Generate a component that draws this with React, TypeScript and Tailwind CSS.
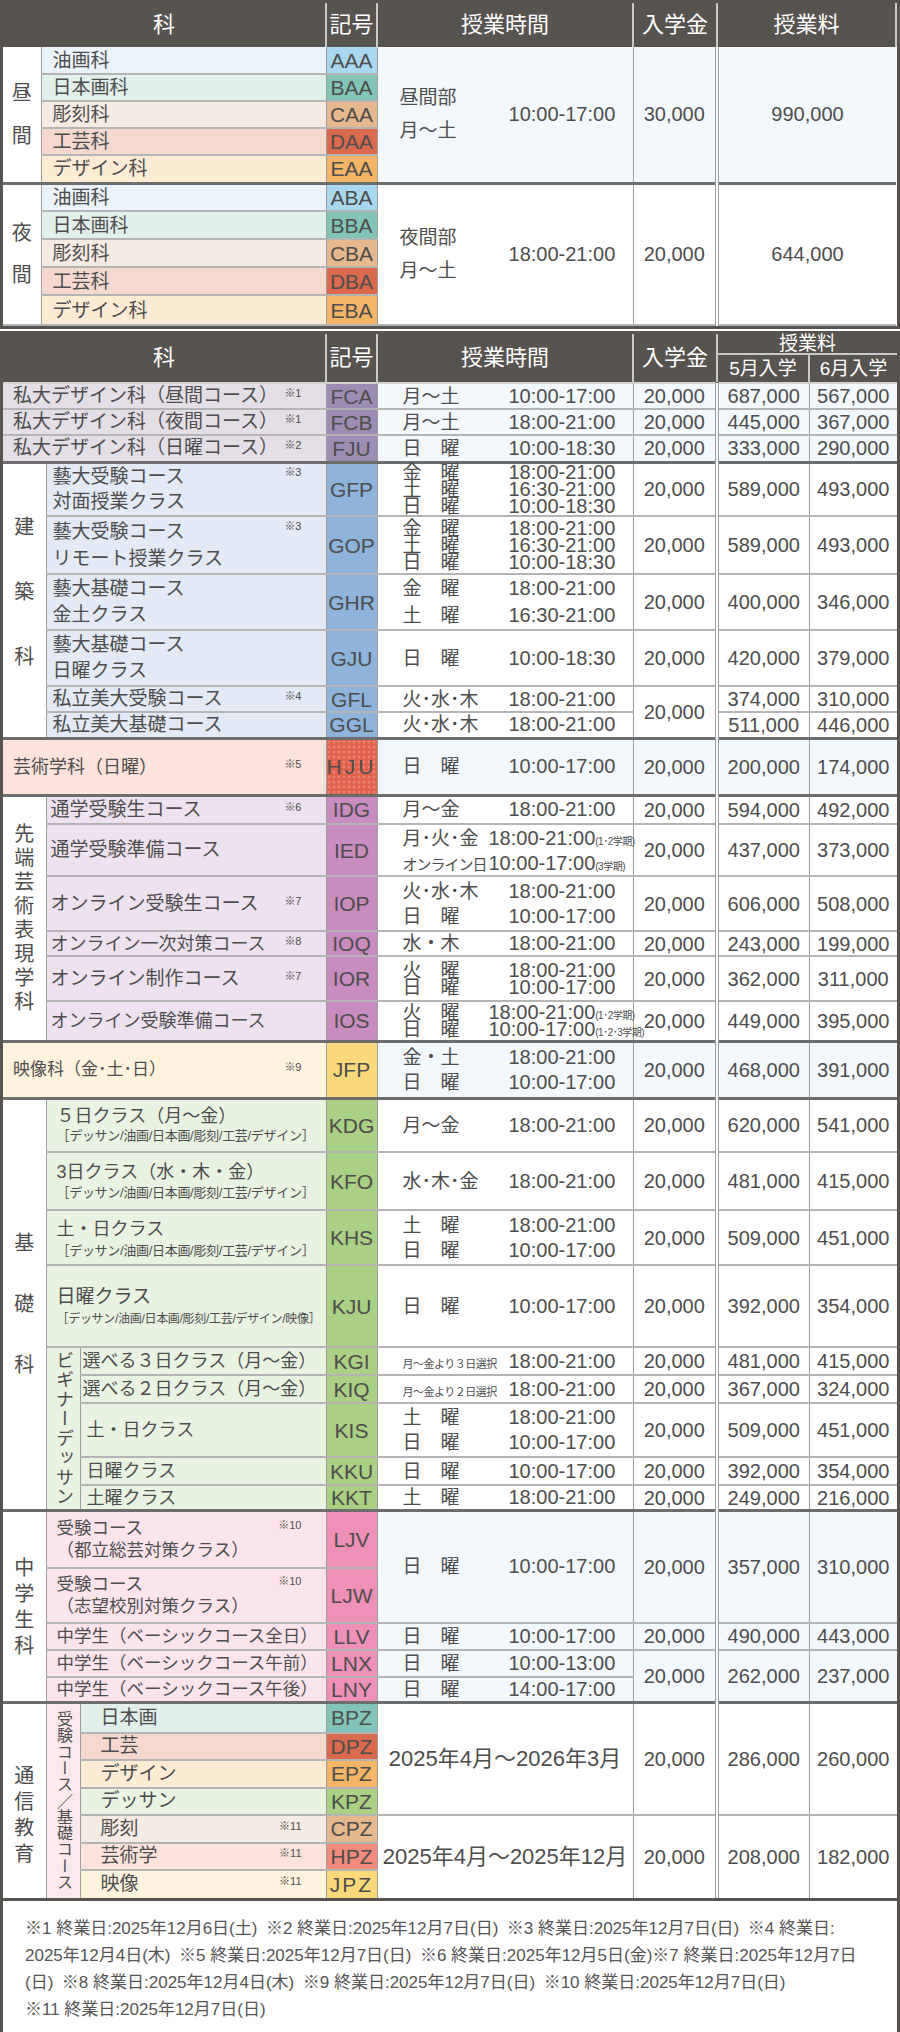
import React from "react";

type Line = { d: string; t: string; n?: string; ds?: string };

const TD = "p-0 border-r border-r-[#9d9d9d]";
const R = "border-b-2 border-b-[#b4b4b4]";
const G = "border-t-[3px] border-t-[#6d6d6d]";
const BL = "bg-[#f3f8fd]";
const HT = "p-0 font-normal text-[22px] leading-none border-r-2 border-r-[#c9c9c9]";

function Times({ lines, lh = "leading-[22px]", dw = "w-[106px]" }: { lines: Line[]; lh?: string; dw?: string }) {
  return (
    <div className="flex flex-col pl-[25px]">
      {lines.map((l, i) => (
        <div key={i} className={`flex items-baseline whitespace-nowrap ${lh}`}>
          <span className={`${dw} shrink-0 ${l.ds ?? "text-[19px]"}`}>{l.d}</span>
          <span className="text-[20px]">{l.t}</span>
          {l.n && <span className="text-[10px] leading-none tracking-[-0.5px]">{l.n}</span>}
        </div>
      ))}
    </div>
  );
}

function Name({
  a,
  b,
  sub,
  note,
  pl = "pl-[6px]",
  size = "text-[19px]",
  lh = "leading-[22px]",
  subCls = "text-[13px] tracking-[-0.3px]",
}: {
  a: string;
  b?: string;
  sub?: string;
  note?: string;
  pl?: string;
  size?: string;
  lh?: string;
  subCls?: string;
}) {
  return (
    <div className={`flex flex-col pr-[24px] ${pl} ${size}`}>
      <div className={`flex items-start justify-between whitespace-nowrap ${lh}`}>
        <span>{a}</span>
        {note && <span className="text-[11px] leading-[16px]">{note}</span>}
      </div>
      {b && <div className={`whitespace-nowrap ${lh}`}>{b}</div>}
      {sub && <div className={`whitespace-nowrap leading-[18px] ${subCls}`}>{sub}</div>}
    </div>
  );
}

function Code({ c, bg, x = "" }: { c: string; bg: string; x?: string }) {
  return <td className={`${TD} ${bg} text-center text-[21px] leading-none ${x}`}>{c}</td>;
}

function Fee({ v, k, bg = "bg-white", rs }: { v: string; k: 0 | 1 | 2 | 3; bg?: string; rs?: number }) {
  const cls =
    k === 0
      ? "border-r border-r-[#9d9d9d]"
      : k === 1
        ? "border-r border-r-[#9d9d9d] border-l-4 border-double border-l-[#9d9d9d]"
        : k === 3
          ? "border-l-4 border-double border-l-[#9d9d9d]"
          : "";
  return (
    <td rowSpan={rs} className={`p-0 text-center text-[20px] leading-none ${bg} ${cls}`}>
      {v}
    </td>
  );
}

function Fees({ a, b, c, bg = "bg-white", rs }: { a: string; b: string; c: string; bg?: string; rs?: number }) {
  return (
    <>
      <Fee v={a} k={0} bg={bg} rs={rs} />
      <Fee v={b} k={1} bg={bg} rs={rs} />
      <Fee v={c} k={2} bg={bg} rs={rs} />
    </>
  );
}

function VLabel({ t, gap, rs, x = "" }: { t: string; gap: string; rs: number; x?: string }) {
  return (
    <td rowSpan={rs} className={`${TD} bg-white`}>
      <div className={`flex flex-col items-center text-[20px] leading-[20px] ${gap} ${x}`}>
        {t.split("").map((ch, i) => (
          <span key={i}>{ch}</span>
        ))}
      </div>
    </td>
  );
}

const BR1 = "［デッサン/油画/日本画/彫刻/工芸/デザイン］";
const BR2 = "［デッサン/油画/日本画/彫刻/工芸/デザイン/映像］";
const TINY = "text-[11px] leading-none tracking-[-0.5px]";

const NOTES = [
  "※1 終業日:2025年12月6日(土)\u2002※2 終業日:2025年12月7日(日)\u2002※3 終業日:2025年12月7日(日)\u2002※4 終業日:",
  "2025年12月4日(木)\u2002※5 終業日:2025年12月7日(日)\u2002※6 終業日:2025年12月5日(金)※7 終業日:2025年12月7日",
  "(日)\u2002※8 終業日:2025年12月4日(木)\u2002※9 終業日:2025年12月7日(日)\u2002※10 終業日:2025年12月7日(日)",
  "※11 終業日:2025年12月7日(日)",
];

const DAY = [
  ["油画科", "AAA", "bg-[#eaf2fa]", "bg-[#a9d7ef]"],
  ["日本画科", "BAA", "bg-[#e2f0ec]", "bg-[#82c5b8]"],
  ["彫刻科", "CAA", "bg-[#f5ebe2]", "bg-[#e5b98d]"],
  ["工芸科", "DAA", "bg-[#f5d9cf]", "bg-[#db6a4d]"],
  ["デザイン科", "EAA", "bg-[#fdebd3]", "bg-[#f4b566]"],
];
const NIGHT = [
  ["油画科", "ABA", "bg-[#eaf2fa]", "bg-[#a9d7ef]"],
  ["日本画科", "BBA", "bg-[#e2f0ec]", "bg-[#82c5b8]"],
  ["彫刻科", "CBA", "bg-[#f5ebe2]", "bg-[#e5b98d]"],
  ["工芸科", "DBA", "bg-[#f5d9cf]", "bg-[#db6a4d]"],
  ["デザイン科", "EBA", "bg-[#fdebd3]", "bg-[#f4b566]"],
];

function TopTable() {
  return (
    <div className="border-[3px] border-[#57534f]">
      <table className="w-full table-fixed border-collapse text-[19px] leading-none">
        <colgroup>
          <col className="w-[38px]" />
          <col className="w-[285px]" />
          <col className="w-[51px]" />
          <col className="w-[256px]" />
          <col className="w-[84px]" />
          <col />
        </colgroup>
        <thead>
          <tr className="h-[44px] bg-[#57534f] text-white">
            <th colSpan={2} className={HT}>科</th>
            <th className={HT}>記号</th>
            <th className={HT}>授業時間</th>
            <th className={HT}>入学金</th>
            <th className={`${HT} border-r-0`}>授業料</th>
          </tr>
        </thead>
        <tbody>
          {DAY.map(([n, c, nb, cb], i) => (
            <tr key={c} className={`${R} ${i === 4 ? "h-[28px]" : "h-[27px]"}`}>
              {i === 0 && <VLabel t="昼間" gap="gap-[23px]" rs={5} />}
              <td className={`${TD} ${nb}`}>
                <div className="pl-[11px]">{n}</div>
              </td>
              <Code c={c} bg={cb} />
              {i === 0 && (
                <>
                  <td rowSpan={5} className={`${TD} ${BL}`}>
                    <div className="flex items-center pl-[22px]">
                      <div className="flex w-[109px] flex-col gap-[14px] leading-[19px]">
                        <span>昼間部</span>
                        <span>月〜土</span>
                      </div>
                      <span className="text-[20px]">10:00-17:00</span>
                    </div>
                  </td>
                  <Fee v="30,000" k={0} bg={BL} rs={5} />
                  <Fee v="990,000" k={3} bg={BL} rs={5} />
                </>
              )}
            </tr>
          ))}
          {NIGHT.map(([n, c, nb, cb], i) => (
            <tr key={c} className={`${R} ${i === 0 ? G : ""} ${i === 4 ? "h-[30px]" : "h-[28px]"}`}>
              {i === 0 && <VLabel t="夜間" gap="gap-[22px]" rs={5} />}
              <td className={`${TD} ${nb}`}>
                <div className="pl-[11px]">{n}</div>
              </td>
              <Code c={c} bg={cb} />
              {i === 0 && (
                <>
                  <td rowSpan={5} className={`${TD} bg-white`}>
                    <div className="flex items-center pl-[22px]">
                      <div className="flex w-[109px] flex-col gap-[14px] leading-[19px]">
                        <span>夜間部</span>
                        <span>月〜土</span>
                      </div>
                      <span className="text-[20px]">18:00-21:00</span>
                    </div>
                  </td>
                  <Fee v="20,000" k={0} rs={5} />
                  <Fee v="644,000" k={3} rs={5} />
                </>
              )}
            </tr>
          ))}
        </tbody>
      </table>
    </div>
  );
}

const one = (d: string, t: string): Line[] => [{ d, t }];

function MainTable() {
  const pN = "bg-[#e4dee7]";
  const pC = "bg-[#9e8db2]";
  const aN = "bg-[#e3eaf5]";
  const aC = "bg-[#8fb3da]";
  const sN = "bg-[#efe2f0]";
  const sC = "bg-[#c98cbf]";
  const kN = "bg-[#e9f3e1]";
  const kC = "bg-[#a9d083]";
  const mN = "bg-[#fce4ed]";
  const mC = "bg-[#ee90b8]";
  return (
    <div className="mt-[2px] border-[3px] border-[#57534f]">
      <table className="w-full table-fixed border-collapse text-[19px] leading-none">
        <colgroup>
          <col className="w-[43px]" />
          <col className="w-[34px]" />
          <col className="w-[246px]" />
          <col className="w-[51px]" />
          <col className="w-[256px]" />
          <col className="w-[84px]" />
          <col className="w-[92px]" />
          <col />
        </colgroup>
        <thead>
          <tr className="h-[20px] bg-[#57534f] text-white">
            <th colSpan={3} rowSpan={2} className={HT}>科</th>
            <th rowSpan={2} className={`${HT} border-l-2 border-l-[#c9c9c9]`}>記号</th>
            <th rowSpan={2} className={HT}>授業時間</th>
            <th rowSpan={2} className={HT}>入学金</th>
            <th colSpan={2} className="border-b-2 border-b-[#c9c9c9] p-0 text-[19px] font-normal leading-none">
              授業料
            </th>
          </tr>
          <tr className="h-[29px] bg-[#57534f] text-white">
            <th className="border-r-2 border-r-[#c9c9c9] p-0 text-[19px] font-normal leading-none">5月入学</th>
            <th className="p-0 text-[19px] font-normal leading-none">6月入学</th>
          </tr>
        </thead>
        <tbody>
          {/* 私大デザイン科 */}
          <tr className={`${R} h-[26px] border-t-2 border-t-[#d4d4d4]`}>
            <td colSpan={3} className={`${TD} ${pN}`}>
              <Name a="私大デザイン科（昼間コース）" note="※1" pl="pl-[10px]" />
            </td>
            <Code c="FCA" bg={pC} />
            <td className={`${TD} ${BL}`}><Times lines={one("月〜土", "10:00-17:00")} /></td>
            <Fees a="20,000" b="687,000" c="567,000" bg={BL} />
          </tr>
          <tr className={`${R} h-[26px]`}>
            <td colSpan={3} className={`${TD} ${pN}`}>
              <Name a="私大デザイン科（夜間コース）" note="※1" pl="pl-[10px]" />
            </td>
            <Code c="FCB" bg={pC} />
            <td className={`${TD} ${BL}`}><Times lines={one("月〜土", "18:00-21:00")} /></td>
            <Fees a="20,000" b="445,000" c="367,000" bg={BL} />
          </tr>
          <tr className={`${R} h-[27px]`}>
            <td colSpan={3} className={`${TD} ${pN}`}>
              <Name a="私大デザイン科（日曜コース）" note="※2" pl="pl-[10px]" />
            </td>
            <Code c="FJU" bg={pC} />
            <td className={`${TD} ${BL}`}><Times lines={one("日　曜", "10:00-18:30")} /></td>
            <Fees a="20,000" b="333,000" c="290,000" bg={BL} />
          </tr>

          {/* 建築科 */}
          <tr className={`${R} ${G} h-[54px]`}>
            <VLabel t="建築科" gap="gap-[45px]" rs={6} x="pb-[16px]" />
            <td colSpan={2} className={`${TD} ${aN}`}>
              <Name a="藝大受験コース" b="対面授業クラス" note="※3" lh="leading-[25px]" />
            </td>
            <Code c="GFP" bg={aC} />
            <td className={TD}>
              <Times
                lh="leading-[16px]"
                lines={[
                  { d: "金　曜", t: "18:00-21:00" },
                  { d: "土　曜", t: "16:30-21:00" },
                  { d: "日　曜", t: "10:00-18:30" },
                ]}
              />
            </td>
            <Fees a="20,000" b="589,000" c="493,000" />
          </tr>
          <tr className={`${R} h-[58px]`}>
            <td colSpan={2} className={`${TD} ${aN}`}>
              <Name a="藝大受験コース" b="リモート授業クラス" note="※3" lh="leading-[27px]" />
            </td>
            <Code c="GOP" bg={aC} />
            <td className={TD}>
              <Times
                lh="leading-[17px]"
                lines={[
                  { d: "金　曜", t: "18:00-21:00" },
                  { d: "土　曜", t: "16:30-21:00" },
                  { d: "日　曜", t: "10:00-18:30" },
                ]}
              />
            </td>
            <Fees a="20,000" b="589,000" c="493,000" />
          </tr>
          <tr className={`${R} h-[55px]`}>
            <td colSpan={2} className={`${TD} ${aN}`}>
              <Name a="藝大基礎コース" b="金土クラス" lh="leading-[26px]" />
            </td>
            <Code c="GHR" bg={aC} />
            <td className={TD}>
              <Times
                lh="leading-[26px]"
                lines={[
                  { d: "金　曜", t: "18:00-21:00" },
                  { d: "土　曜", t: "16:30-21:00" },
                ]}
              />
            </td>
            <Fees a="20,000" b="400,000" c="346,000" />
          </tr>
          <tr className={`${R} h-[56px]`}>
            <td colSpan={2} className={`${TD} ${aN}`}>
              <Name a="藝大基礎コース" b="日曜クラス" lh="leading-[26px]" />
            </td>
            <Code c="GJU" bg={aC} />
            <td className={TD}><Times lines={one("日　曜", "10:00-18:30")} /></td>
            <Fees a="20,000" b="420,000" c="379,000" />
          </tr>
          <tr className={`${R} h-[26px]`}>
            <td colSpan={2} className={`${TD} ${aN}`}>
              <Name a="私立美大受験コース" note="※4" />
            </td>
            <Code c="GFL" bg={aC} />
            <td className={TD}><Times lines={one("火･水･木", "18:00-21:00")} /></td>
            <Fee v="20,000" k={0} rs={2} />
            <Fee v="374,000" k={1} />
            <Fee v="310,000" k={2} />
          </tr>
          <tr className={`${R} h-[26px]`}>
            <td colSpan={2} className={`${TD} ${aN}`}>
              <Name a="私立美大基礎コース" />
            </td>
            <Code c="GGL" bg={aC} />
            <td className={TD}><Times lines={one("火･水･木", "18:00-21:00")} /></td>
            <Fee v="511,000" k={1} />
            <Fee v="446,000" k={2} />
          </tr>

          {/* 芸術学科 */}
          <tr className={`${R} ${G} h-[57px]`}>
            <td colSpan={3} className={`${TD} bg-[#fde3db]`}>
              <Name a="芸術学科（日曜）" note="※5" pl="pl-[10px]" size="text-[18px]" />
            </td>
            <Code
              c="HJU"
              bg="bg-[#e2614b] bg-[radial-gradient(rgba(255,255,255,0.45)_0.8px,transparent_1.2px)] bg-[length:5px_5px]"
              x="tracking-[3px]"
            />
            <td className={`${TD} ${BL}`}><Times lines={one("日　曜", "10:00-17:00")} /></td>
            <Fees a="20,000" b="200,000" c="174,000" bg={BL} />
          </tr>

          {/* 先端芸術表現学科 */}
          <tr className={`${R} ${G} h-[29px]`}>
            <VLabel t="先端芸術表現学科" gap="gap-[4px]" rs={6} />
            <td colSpan={2} className={`${TD} ${sN}`}>
              <Name a="通学受験生コース" note="※6" pl="pl-[4px]" />
            </td>
            <Code c="IDG" bg={sC} />
            <td className={TD}><Times lines={one("月〜金", "18:00-21:00")} /></td>
            <Fees a="20,000" b="594,000" c="492,000" />
          </tr>
          <tr className={`${R} h-[52px]`}>
            <td colSpan={2} className={`${TD} ${sN}`}>
              <Name a="通学受験準備コース" pl="pl-[4px]" />
            </td>
            <Code c="IED" bg={sC} />
            <td className={TD}>
              <Times
                lh="leading-[24px]"
                dw="w-[86px]"
                lines={[
                  { d: "月･火･金", t: "18:00-21:00", n: "(1･2学期)" },
                  { d: "オンライン日", t: "10:00-17:00", n: "(3学期)", ds: "text-[15px] leading-none tracking-[-1px]" },
                ]}
              />
            </td>
            <Fees a="20,000" b="437,000" c="373,000" />
          </tr>
          <tr className={`${R} h-[55px]`}>
            <td colSpan={2} className={`${TD} ${sN}`}>
              <Name a="オンライン受験生コース" note="※7" pl="pl-[4px]" />
            </td>
            <Code c="IOP" bg={sC} />
            <td className={TD}>
              <Times
                lh="leading-[25px]"
                lines={[
                  { d: "火･水･木", t: "18:00-21:00" },
                  { d: "日　曜", t: "10:00-17:00" },
                ]}
              />
            </td>
            <Fees a="20,000" b="606,000" c="508,000" />
          </tr>
          <tr className={`${R} h-[25px]`}>
            <td colSpan={2} className={`${TD} ${sN}`}>
              <Name a="オンライン一次対策コース" note="※8" pl="pl-[4px]" size="text-[18px]" />
            </td>
            <Code c="IOQ" bg={sC} />
            <td className={TD}><Times lines={one("水・木", "18:00-21:00")} /></td>
            <Fees a="20,000" b="243,000" c="199,000" />
          </tr>
          <tr className={`${R} h-[45px]`}>
            <td colSpan={2} className={`${TD} ${sN}`}>
              <Name a="オンライン制作コース" note="※7" pl="pl-[4px]" />
            </td>
            <Code c="IOR" bg={sC} />
            <td className={TD}>
              <Times
                lh="leading-[16px]"
                lines={[
                  { d: "火　曜", t: "18:00-21:00" },
                  { d: "日　曜", t: "10:00-17:00" },
                ]}
              />
            </td>
            <Fees a="20,000" b="362,000" c="311,000" />
          </tr>
          <tr className={`${R} h-[40px]`}>
            <td colSpan={2} className={`${TD} ${sN}`}>
              <Name a="オンライン受験準備コース" pl="pl-[4px]" size="text-[18px]" />
            </td>
            <Code c="IOS" bg={sC} />
            <td className={TD}>
              <Times
                lh="leading-[17px]"
                dw="w-[86px]"
                lines={[
                  { d: "火　曜", t: "18:00-21:00", n: "(1･2学期)" },
                  { d: "日　曜", t: "10:00-17:00", n: "(1･2･3学期)" },
                ]}
              />
            </td>
            <Fees a="20,000" b="449,000" c="395,000" />
          </tr>

          {/* 映像科 */}
          <tr className={`${R} ${G} h-[57px]`}>
            <td colSpan={3} className={`${TD} bg-[#fef3dc]`}>
              <Name a="映像科（金･土･日）" note="※9" pl="pl-[10px]" size="text-[17px]" />
            </td>
            <Code c="JFP" bg="bg-[#fad97a]" />
            <td className={`${TD} ${BL}`}>
              <Times
                lh="leading-[25px]"
                lines={[
                  { d: "金・土", t: "18:00-21:00" },
                  { d: "日　曜", t: "10:00-17:00" },
                ]}
              />
            </td>
            <Fees a="20,000" b="468,000" c="391,000" bg={BL} />
          </tr>

          {/* 基礎科 */}
          <tr className={`${R} ${G} h-[54px]`}>
            <VLabel t="基礎科" gap="gap-[41px]" rs={9} />
            <td colSpan={2} className={`${TD} ${kN}`}>
              <Name a="５日クラス（月〜金）" sub={BR1} pl="pl-[10px]" size="text-[18px]" />
            </td>
            <Code c="KDG" bg={kC} />
            <td className={TD}><Times lines={one("月〜金", "18:00-21:00")} /></td>
            <Fees a="20,000" b="620,000" c="541,000" />
          </tr>
          <tr className={`${R} h-[58px]`}>
            <td colSpan={2} className={`${TD} ${kN}`}>
              <Name a="3日クラス（水・木・金）" sub={BR1} pl="pl-[10px]" size="text-[18px]" lh="leading-[24px]" />
            </td>
            <Code c="KFO" bg={kC} />
            <td className={TD}><Times lines={one("水･木･金", "18:00-21:00")} /></td>
            <Fees a="20,000" b="481,000" c="415,000" />
          </tr>
          <tr className={`${R} h-[55px]`}>
            <td colSpan={2} className={`${TD} ${kN}`}>
              <Name a="土・日クラス" sub={BR1} pl="pl-[10px]" size="text-[18px]" lh="leading-[26px]" />
            </td>
            <Code c="KHS" bg={kC} />
            <td className={TD}>
              <Times
                lh="leading-[24px]"
                lines={[
                  { d: "土　曜", t: "18:00-21:00" },
                  { d: "日　曜", t: "10:00-17:00" },
                ]}
              />
            </td>
            <Fees a="20,000" b="509,000" c="451,000" />
          </tr>
          <tr className={`${R} h-[82px]`}>
            <td colSpan={2} className={`${TD} ${kN}`}>
              <Name
                a="日曜クラス"
                sub={BR2}
                pl="pl-[10px]"
                size="text-[19px]"
                lh="leading-[26px]"
                subCls="text-[12px] tracking-[-0.3px]"
              />
            </td>
            <Code c="KJU" bg={kC} />
            <td className={TD}><Times lines={one("日　曜", "10:00-17:00")} /></td>
            <Fees a="20,000" b="392,000" c="354,000" />
          </tr>
          <tr className={`${R} h-[28px]`}>
            <td rowSpan={5} className={`${TD} ${kN} align-top`}>
              <div className="flex justify-center pt-[3px]">
                <span className="text-[18px] leading-[18px] tracking-[1.5px] [writing-mode:vertical-rl]">ビギナーデッサン</span>
              </div>
            </td>
            <td className={`${TD} ${kN}`}>
              <Name a="選べる３日クラス（月〜金）" pl="pl-[2px]" size="text-[18px]" />
            </td>
            <Code c="KGI" bg={kC} />
            <td className={TD}>
              <Times lines={[{ d: "月〜金より３日選択", t: "18:00-21:00", ds: TINY }]} />
            </td>
            <Fees a="20,000" b="481,000" c="415,000" />
          </tr>
          <tr className={`${R} h-[28px]`}>
            <td className={`${TD} ${kN}`}>
              <Name a="選べる２日クラス（月〜金）" pl="pl-[2px]" size="text-[18px]" />
            </td>
            <Code c="KIQ" bg={kC} />
            <td className={TD}>
              <Times lines={[{ d: "月〜金より２日選択", t: "18:00-21:00", ds: TINY }]} />
            </td>
            <Fees a="20,000" b="367,000" c="324,000" />
          </tr>
          <tr className={`${R} h-[54px]`}>
            <td className={`${TD} ${kN}`}>
              <Name a="土・日クラス" pl="pl-[6px]" size="text-[18px]" />
            </td>
            <Code c="KIS" bg={kC} />
            <td className={TD}>
              <Times
                lh="leading-[25px]"
                lines={[
                  { d: "土　曜", t: "18:00-21:00" },
                  { d: "日　曜", t: "10:00-17:00" },
                ]}
              />
            </td>
            <Fees a="20,000" b="509,000" c="451,000" />
          </tr>
          <tr className={`${R} h-[28px]`}>
            <td className={`${TD} ${kN}`}>
              <Name a="日曜クラス" pl="pl-[6px]" size="text-[18px]" />
            </td>
            <Code c="KKU" bg={kC} />
            <td className={TD}><Times lines={one("日　曜", "10:00-17:00")} /></td>
            <Fees a="20,000" b="392,000" c="354,000" />
          </tr>
          <tr className={`${R} h-[25px]`}>
            <td className={`${TD} ${kN}`}>
              <Name a="土曜クラス" pl="pl-[6px]" size="text-[18px]" />
            </td>
            <Code c="KKT" bg={kC} />
            <td className={TD}><Times lines={one("土　曜", "18:00-21:00")} /></td>
            <Fees a="20,000" b="249,000" c="216,000" />
          </tr>

          {/* 中学生科 */}
          <tr className={`${R} ${G} h-[57px]`}>
            <VLabel t="中学生科" gap="gap-[6px]" rs={5} />
            <td colSpan={2} className={`${TD} ${mN}`}>
              <Name a="受験コース" b="（都立総芸対策クラス）" note="※10" pl="pl-[10px]" size="text-[17.5px]" />
            </td>
            <Code c="LJV" bg={mC} />
            <td rowSpan={2} className={`${TD} ${BL}`}><Times lines={one("日　曜", "10:00-17:00")} /></td>
            <Fees a="20,000" b="357,000" c="310,000" bg={BL} rs={2} />
          </tr>
          <tr className={`${R} h-[55px]`}>
            <td colSpan={2} className={`${TD} ${mN}`}>
              <Name a="受験コース" b="（志望校別対策クラス）" note="※10" pl="pl-[10px]" size="text-[17.5px]" />
            </td>
            <Code c="LJW" bg={mC} />
          </tr>
          <tr className={`${R} h-[27px]`}>
            <td colSpan={2} className={`${TD} ${mN}`}>
              <Name a="中学生（ベーシックコース全日）" pl="pl-[10px]" size="text-[17.5px]" />
            </td>
            <Code c="LLV" bg={mC} />
            <td className={`${TD} ${BL}`}><Times lines={one("日　曜", "10:00-17:00")} /></td>
            <Fees a="20,000" b="490,000" c="443,000" bg={BL} />
          </tr>
          <tr className={`${R} h-[27px]`}>
            <td colSpan={2} className={`${TD} ${mN}`}>
              <Name a="中学生（ベーシックコース午前）" pl="pl-[10px]" size="text-[17.5px]" />
            </td>
            <Code c="LNX" bg={mC} />
            <td className={`${TD} ${BL}`}><Times lines={one("日　曜", "10:00-13:00")} /></td>
            <Fees a="20,000" b="262,000" c="237,000" bg={BL} rs={2} />
          </tr>
          <tr className={`${R} h-[26px]`}>
            <td colSpan={2} className={`${TD} ${mN}`}>
              <Name a="中学生（ベーシックコース午後）" pl="pl-[10px]" size="text-[17.5px]" />
            </td>
            <Code c="LNY" bg={mC} />
            <td className={`${TD} ${BL}`}><Times lines={one("日　曜", "14:00-17:00")} /></td>
          </tr>

          {/* 通信教育 */}
          <tr className={`${R} ${G} h-[30px]`}>
            <VLabel t="通信教育" gap="gap-[6px]" rs={7} x="pt-[28px]" />
            <td rowSpan={7} className={`${TD} bg-[#fce9ee] align-top`}>
              <div className="flex justify-center pt-[7px]">
                <span className="text-[16px] leading-[16px] tracking-[0.3px] [writing-mode:vertical-rl]">受験コース／基礎コース</span>
              </div>
            </td>
            <td className={`${TD} bg-[#e2f0ec]`}><Name a="日本画" pl="pl-[20px]" /></td>
            <Code c="BPZ" bg="bg-[#82c5b8]" />
            <td rowSpan={4} className={`${TD} text-center text-[22px]`}>2025年4月〜2026年3月</td>
            <Fees a="20,000" b="286,000" c="260,000" rs={4} />
          </tr>
          <tr className={`${R} h-[27px]`}>
            <td className={`${TD} bg-[#f5d9cf]`}><Name a="工芸" pl="pl-[20px]" /></td>
            <Code c="DPZ" bg="bg-[#db6a4d]" />
          </tr>
          <tr className={`${R} h-[28px]`}>
            <td className={`${TD} bg-[#fdebd3]`}><Name a="デザイン" pl="pl-[20px]" /></td>
            <Code c="EPZ" bg="bg-[#f4b566]" />
          </tr>
          <tr className={`${R} h-[27px]`}>
            <td className={`${TD} bg-[#e9f3e1]`}><Name a="デッサン" pl="pl-[20px]" /></td>
            <Code c="KPZ" bg="bg-[#a9d083]" />
          </tr>
          <tr className={`${R} h-[28px]`}>
            <td className={`${TD} bg-[#f5ebe2]`}><Name a="彫刻" note="※11" pl="pl-[20px]" /></td>
            <Code c="CPZ" bg="bg-[#e5b98d]" />
            <td rowSpan={3} className={`${TD} text-center text-[22px]`}>2025年4月〜2025年12月</td>
            <Fees a="20,000" b="208,000" c="182,000" rs={3} />
          </tr>
          <tr className={`${R} h-[27px]`}>
            <td className={`${TD} bg-[#fde3db]`}><Name a="芸術学" note="※11" pl="pl-[20px]" /></td>
            <Code c="HPZ" bg="bg-[#f28a7d]" />
          </tr>
          <tr className="h-[28px]">
            <td className={`${TD} bg-[#fef3dc]`}><Name a="映像" note="※11" pl="pl-[20px]" /></td>
            <Code c="JPZ" bg="bg-[#fad97a]" x="tracking-[2px]" />
          </tr>
        </tbody>
      </table>
      <div className="border-t-[3px] border-t-[#57534f] bg-white pb-[12px] pl-[22px] pt-[14px] text-[17px] leading-[27px] text-[#555555]">
        {NOTES.map((l, i) => (
          <div key={i} className="whitespace-nowrap">
            {l}
          </div>
        ))}
      </div>
    </div>
  );
}

export default function App() {
  return (
    <div className="w-[900px] bg-white font-['Liberation_Sans','Noto_Sans_CJK_JP',sans-serif] text-[#4d4d4d]">
      <TopTable />
      <MainTable />
    </div>
  );
}
